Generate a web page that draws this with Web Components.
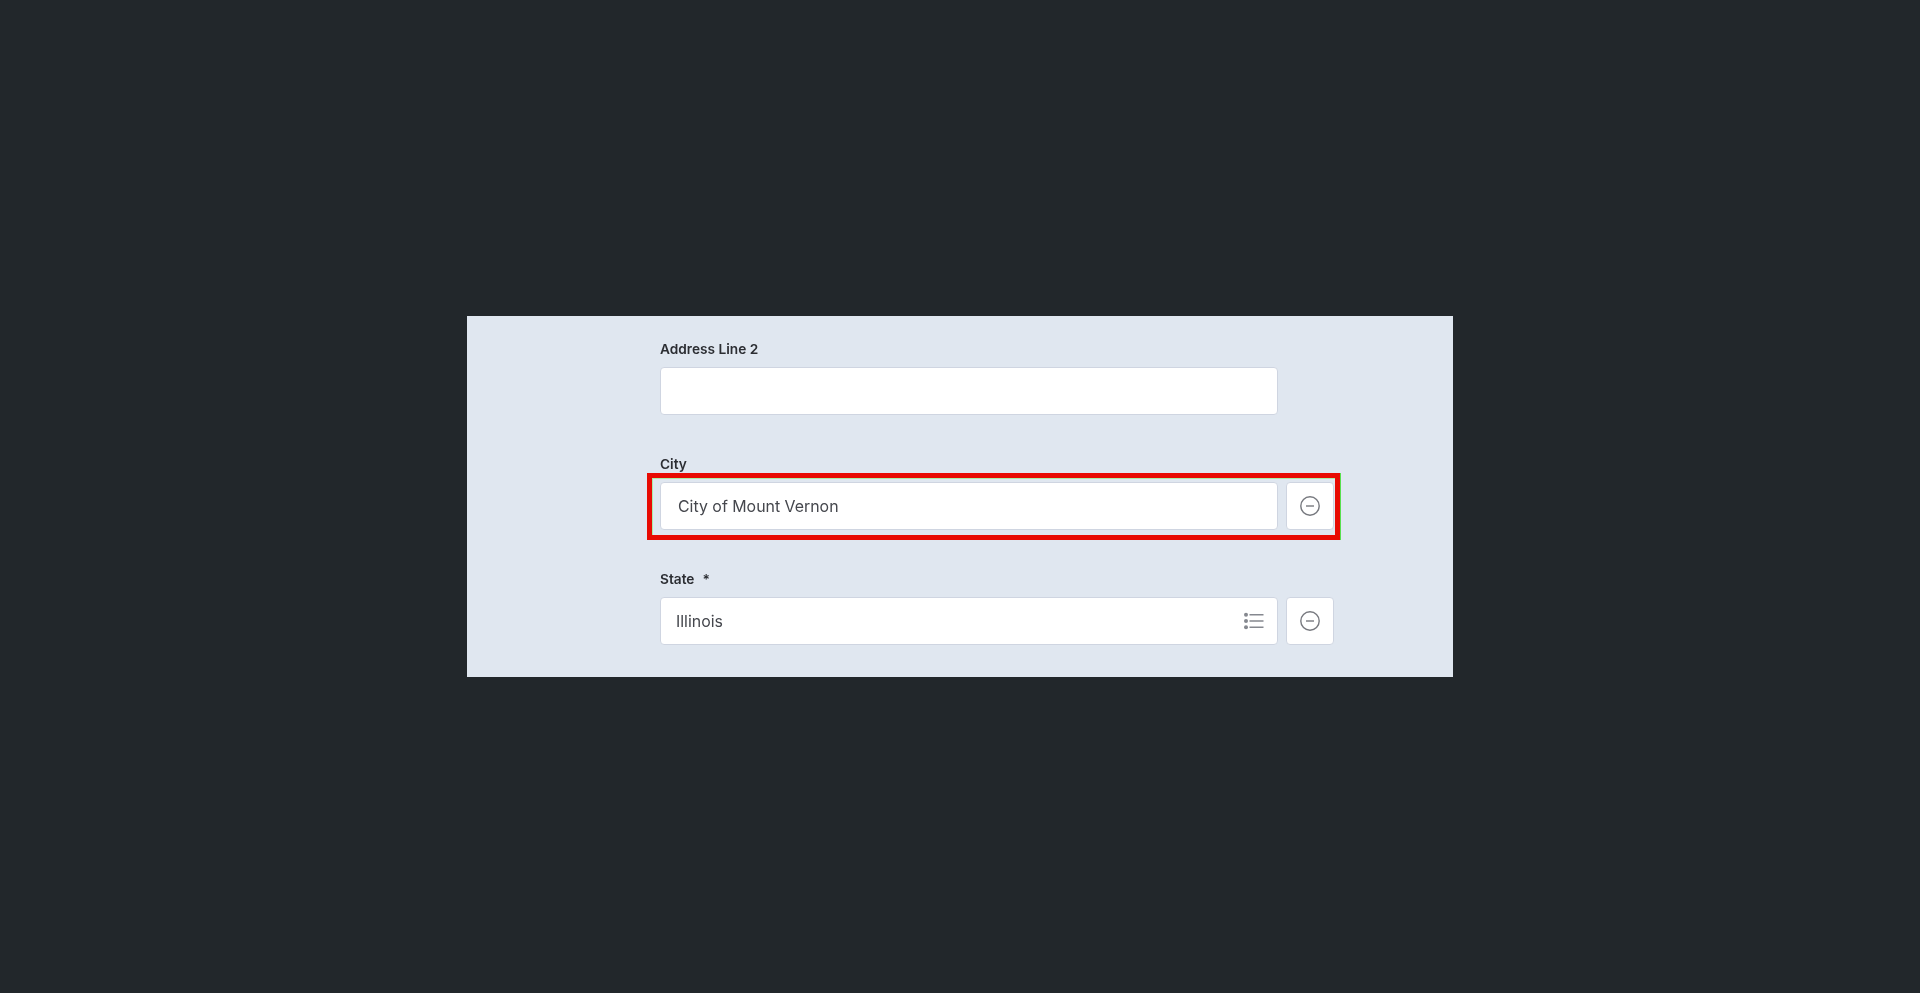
<!DOCTYPE html>
<html>
<head>
<meta charset="utf-8">
<title>Address form</title>
<style>
html, body{ margin: 0; height: 100%; }
body{
    background: #22272b;
    display: flex;
    align-items: center;
    justify-content: center;
    font-family: "Inter", "Liberation Sans", sans-serif;
}
</style>
</head>
<body>

<form-panel>
    <form-field label="Address Line 2">
        <text-box></text-box>
    </form-field>
    <form-field label="City" highlight style="margin-top:41px">
        <text-box value="City of Mount Vernon" inset="18"></text-box>
        <remove-button></remove-button>
    </form-field>
    <form-field label="State" required style="margin-top:41px">
        <text-box value="Illinois" inset="16" list></text-box>
        <remove-button></remove-button>
    </form-field>
</form-panel>

<script>
class FormPanel extends HTMLElement{
    constructor(){
        super();
        this.attachShadow({mode: 'open'});
        this.shadowRoot.innerHTML = `
        <style>
        :host{
            display: block;
            box-sizing: border-box;
            width: 986px;
            height: 361px;
            padding: 25px 0 0 193px;
            background: #e0e7f0;
            overflow: hidden;
        }
        </style>
        <slot></slot>`;
    }
}

class FormField extends HTMLElement{
    constructor(){
        super();
        this.attachShadow({mode: 'open'});
        const star = this.hasAttribute('required') ? '<span class="star">*</span>' : '';
        const mark = this.hasAttribute('highlight') ? '<div class="mark"></div>' : '';
        this.shadowRoot.innerHTML = `
        <style>
        :host{ display: block; }
        .label{
            height: 17px;
            line-height: 17px;
            margin-bottom: 9px;
            font-size: 13.7px;
            font-weight: 600;
            color: #2c2e33;
            filter: blur(0.4px);
        }
        .star{ margin-left: 8px; }
        .row{
            position: relative;
            display: flex;
            gap: 8px;
        }
        .mark{
            position: absolute;
            left: -13px;
            top: -9px;
            width: 693px;
            height: 67px;
            box-sizing: border-box;
            border: 5px solid #e80a02;
            box-shadow: 1px 0 0 #58e04e, inset 1px 1px 0 #a8eea8;
        }
        </style>
        <div class="label">${this.getAttribute('label')}${star}</div>
        <div class="row"><slot></slot>${mark}</div>`;
    }
}

class TextBox extends HTMLElement{
    constructor(){
        super();
        this.attachShadow({mode: 'open'});
        const value = this.getAttribute('value') || '';
        const inset = this.getAttribute('inset') || 17;
        const icon = this.hasAttribute('list') ? `
        <svg width="20" height="18" viewBox="0 0 20 18" fill="#85888f" stroke="#85888f">
            <circle cx="2" cy="2.7" r="2" stroke="none"/>
            <circle cx="2" cy="9" r="2" stroke="none"/>
            <circle cx="2" cy="15.3" r="2" stroke="none"/>
            <path d="M5.5 2.7H19.5M5.5 9H19.5M5.5 15.3H19.5" stroke-width="1.4" fill="none"/>
        </svg>` : '';
        this.shadowRoot.innerHTML = `
        <style>
        :host{
            display: flex;
            align-items: center;
            justify-content: space-between;
            box-sizing: border-box;
            width: 618px;
            height: 48px;
            padding: 0 13px 0 ${inset - 1}px;
            background: #fff;
            border: 1px solid #cfd5e1;
            border-radius: 4px;
            font-size: 15.9px;
            color: #45474d;
            filter: blur(0.4px);
        }
        </style>
        <span>${value}</span>${icon}`;
    }
}

class RemoveButton extends HTMLElement{
    constructor(){
        super();
        this.attachShadow({mode: 'open'});
        this.shadowRoot.innerHTML = `
        <style>
        :host{
            display: flex;
            align-items: center;
            justify-content: center;
            box-sizing: border-box;
            width: 48px;
            height: 48px;
            background: #fff;
            border: 1px solid #cfd5e1;
            border-radius: 4px;
            filter: blur(0.4px);
        }
        </style>
        <svg width="20" height="20" viewBox="0 0 20 20" fill="none" stroke="#77797f" stroke-width="1.4">
            <circle cx="10" cy="10" r="9.2"/>
            <path d="M6 10H14"/>
        </svg>`;
    }
}

customElements.define('form-panel', FormPanel);
customElements.define('form-field', FormField);
customElements.define('text-box', TextBox);
customElements.define('remove-button', RemoveButton);
</script>
</body>
</html>
